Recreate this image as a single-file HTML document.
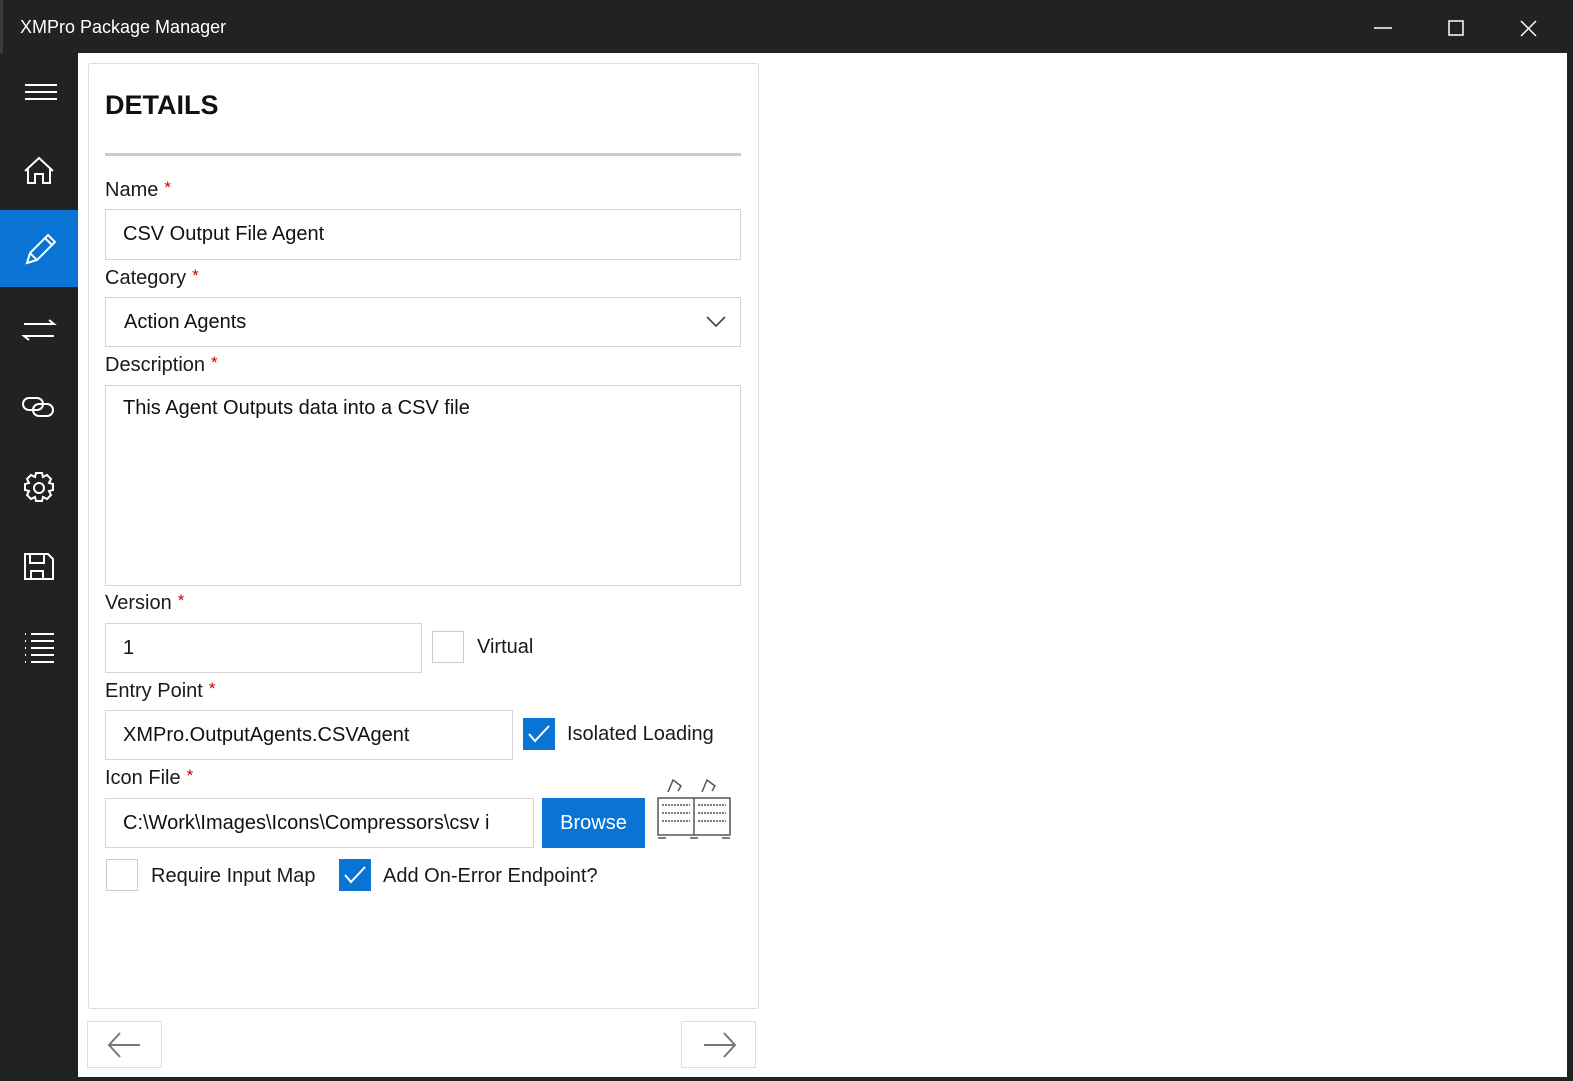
<!DOCTYPE html>
<html><head><style>
*{box-sizing:border-box;margin:0;padding:0}
body{width:1573px;height:1081px;background:#222;position:relative;overflow:hidden;font-family:"Liberation Sans",sans-serif;color:#111}
.a{position:absolute}
.main{left:78px;top:53px;width:1489px;height:1024px;background:#fff}
.lbl{position:absolute;left:105px;font-size:20px;color:#1a1a1a}
.lbl b{color:#c00;font-weight:normal;font-size:17px;margin-left:6px;position:relative;top:-3px}
.inp{position:absolute;border:1.5px solid #d4d4d4;background:#fff;font-size:20px;padding-left:17px;display:flex;align-items:center;color:#111;white-space:nowrap;overflow:hidden}
.cb{position:absolute;width:32px;height:32px;border:1.5px solid #ccc;background:#fff}
.cb.on{background:#0a74d4;border-color:#0a74d4}
.txt{position:absolute;font-size:20px;color:#1a1a1a}
svg{position:absolute}
</style></head><body>
<div class="a" style="left:0;top:0;width:3px;height:53px;background:#3a3a3a"></div>
<div class="a" style="left:20px;top:17px;font-size:18px;color:#fff">XMPro Package Manager</div>
<svg style="left:1370px;top:18px" width="180" height="22" fill="none" stroke="#fff" stroke-width="1.5">
<line x1="4" y1="10" x2="22" y2="10"/>
<rect x="79" y="3" width="14" height="14"/>
<path d="M151 3L166 18M166 3L151 18"/>
</svg>
<div class="a main"></div>
<div class="a" style="left:0;top:210px;width:78px;height:77px;background:#0a74d4"></div>
<svg style="left:0;top:60px" width="78" height="620" fill="none" stroke="#fff" stroke-width="2">
<path d="M25 25h32M25 32h32M25 39h32"/>
<path d="M25 111l14-13 14 13M28 108v15h7v-9h8v9h7v-15"/>
<path d="M27 203l3-10 18-18 7 7-18 18zM45 178l7 7M30 193l6 6"/>
<path d="M24 264h30l-5-4M54 276H24l5 4"/>
<rect x="23" y="338" width="20" height="12" rx="6"/>
<rect x="33" y="344" width="20" height="12" rx="6"/>
<circle cx="39" cy="428" r="5"/>
<path d="M36 413h6l1 4 4-2 4 4-2 4 4 1v6l-4 1 2 4-4 4-4-2-1 4h-6l-1-4-4 2-4-4 2-4-4-1v-6l4-1-2-4 4-4 4 2z"/>
<path d="M25 494h23l5 5v20H25zM30 494v9h14v-9M31 519v-8h12v8"/>
<path d="M31 574h23M31 581h23M31 588h23M31 595h23M31 602h23M25 574h1M25 581h1M25 588h1M25 595h1M25 602h1"/>
</svg>
<div class="a" style="left:88px;top:63px;width:671px;height:946px;border:1.5px solid #ddd;border-radius:3px"></div>
<div class="a" style="left:105px;top:90px;font-size:27px;font-weight:bold;color:#111">DETAILS</div>
<div class="a" style="left:105px;top:153px;width:636px;height:3px;background:#ccc"></div>
<div class="lbl" style="top:179px">Name<b>*</b></div>
<div class="inp" style="left:105px;top:209px;width:636px;height:51px">CSV Output File Agent</div>
<div class="lbl" style="top:267px">Category<b>*</b></div>
<div class="inp" style="left:105px;top:297px;width:636px;height:50px;padding-left:18px">Action Agents</div>
<svg style="left:705px;top:314px" width="22" height="14" fill="none" stroke="#444" stroke-width="1.6"><path d="M2 3l9 9 9-9"/></svg>
<div class="lbl" style="top:354px">Description<b>*</b></div>
<div class="inp" style="left:105px;top:385px;width:636px;height:201px;align-items:flex-start;padding-top:11px">This Agent Outputs data into a CSV file</div>
<div class="lbl" style="top:592px">Version<b>*</b></div>
<div class="inp" style="left:105px;top:623px;width:317px;height:50px">1</div>
<div class="cb" style="left:432px;top:631px"></div>
<div class="txt" style="left:477px;top:636px">Virtual</div>
<div class="lbl" style="top:680px">Entry Point<b>*</b></div>
<div class="inp" style="left:105px;top:710px;width:408px;height:50px">XMPro.OutputAgents.CSVAgent</div>
<div class="cb on" style="left:523px;top:718px"></div>
<svg style="left:523px;top:718px" width="32" height="32" fill="none" stroke="#fff" stroke-width="2"><path d="M6 16l6 7 14-15"/></svg>
<div class="txt" style="left:567px;top:723px">Isolated Loading</div>
<div class="lbl" style="top:767px">Icon File<b>*</b></div>
<div class="inp" style="left:105px;top:798px;width:429px;height:50px">C:\Work\Images\Icons\Compressors\csv i</div>
<div class="a" style="left:542px;top:798px;width:103px;height:50px;background:#0a74d4;color:#fff;font-size:20px;display:flex;align-items:center;justify-content:center">Browse</div>
<svg style="left:655px;top:774px" width="78" height="70" fill="none" stroke="#555" stroke-width="1.5">
<path d="M13 18l5-12 8 6-3 5M47 18l5-12 8 6-3 5"/>
<rect x="3" y="24" width="72" height="37"/><line x1="39" y1="24" x2="39" y2="61"/>
<path d="M7 31h28M7 39h28M7 47h28M43 31h28M43 39h28M43 47h28" stroke-dasharray="2 1"/>
<path d="M3 64h8M35 64h8M67 64h8"/>
</svg>
<div class="cb" style="left:106px;top:859px"></div>
<div class="txt" style="left:151px;top:865px">Require Input Map</div>
<div class="cb on" style="left:339px;top:859px"></div>
<svg style="left:339px;top:859px" width="32" height="32" fill="none" stroke="#fff" stroke-width="2"><path d="M6 16l6 7 14-15"/></svg>
<div class="txt" style="left:383px;top:865px">Add On-Error Endpoint?</div>
<div class="a" style="left:87px;top:1021px;width:75px;height:47px;border:1.5px solid #ddd"></div>
<div class="a" style="left:681px;top:1021px;width:75px;height:47px;border:1.5px solid #ddd"></div>
<svg style="left:100px;top:1028px" width="650" height="34" fill="none" stroke="#777" stroke-width="2">
<path d="M40 17H10M20 5L9 17l11 12"/>
<path d="M604 17h30M624 5l11 12-11 12"/>
</svg>
</body></html>
